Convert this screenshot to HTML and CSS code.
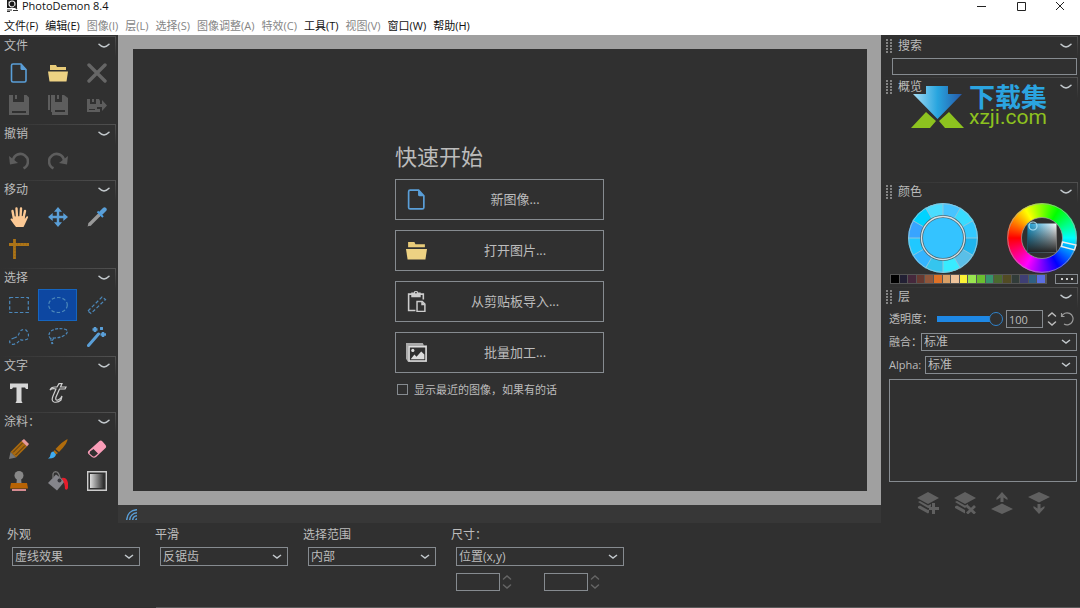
FILE: index.html
```html
<!DOCTYPE html>
<html lang="zh-CN">
<head>
<meta charset="utf-8">
<title>PhotoDemon 8.4</title>
<link rel="stylesheet" href="styles.css">
</head>
<body>
<svg class="defs" aria-hidden="true">
  <symbol id="chev" viewBox="0 0 12 6"><path d="M1 1.200Q3.500 3.800 6 3.900Q8.500 3.800 11 1.200" fill="none" stroke="#c3c9cd" stroke-width="1.500" stroke-linecap="round"/></symbol>
  <symbol id="grip" viewBox="0 0 6 14"><path d="M1 0V14M5 0V14" fill="none" stroke="#989898" stroke-width="1.600" stroke-dasharray="2 1"/></symbol>
  <symbol id="new" viewBox="0 0 20 20"><path d="M4 1H12L17 6.500V17.500Q17 19 15.500 19H4Q2.500 19 2.500 17.500V2.500Q2.500 1 4 1Z" fill="none" stroke="#5a9fd8" stroke-width="1.600"/><path d="M11.500 1L17.500 7H13Q11.500 7 11.500 5.500Z" fill="#5a9fd8"/></symbol>
  <symbol id="open" viewBox="0 0 20 20"><path d="M2 2H8L9 4H18V7H2Z" fill="#e8cb79"/><path d="M0 8.500H20L18.500 18.500H1.500Z" fill="#edd283"/></symbol>
  <symbol id="floppy" viewBox="0 0 20 20"><path d="M0 0H4V7H15V0H17.500L20 2.500V20H0ZM3 16V18H17V16Z" fill="#5d5d5d" fill-rule="evenodd"/><path d="M6 0H8V4H6Z" fill="#5d5d5d"/></symbol>
  <symbol id="spin" viewBox="0 0 10 16"><path d="M1.500 5L5 2L8.500 5M1.500 11L5 14L8.500 11" fill="none" stroke="currentColor" stroke-width="1.500" stroke-linecap="round"/></symbol>
  <symbol id="undo" viewBox="0 0 20 20"><path d="M4 9.500A7.500 7.500 0 1 1 14.500 17.300" fill="none" stroke="#5d5d5d" stroke-width="2.600"/><path d="M0 5L1 13.500L9 12Z" fill="#5d5d5d"/></symbol>
</svg>

<header class="titlebar">
  <svg class="app-icon" viewBox="0 0 13 12"><path d="M1 0H11V8H1Z" fill="#171717"/><circle cx="6" cy="4" r="3" fill="none" stroke="#eee" stroke-width="1.200"/><path d="M8 6L11 9M1 10H6M1 11.500H4M7 10.500H12" stroke="#333" stroke-width="1.200"/><circle cx="3" cy="2" r=".6" fill="#fff"/></svg>
  <h1 class="app-title">PhotoDemon 8.4</h1>
  <div class="window-buttons">
    <button class="win-btn" aria-label="最小化"><svg viewBox="0 0 10 10"><path d="M0 5.500H9" stroke="#222"/></svg></button>
    <button class="win-btn" aria-label="最大化"><svg viewBox="0 0 10 10"><path d="M1.500 1.500H9.500V9.500H1.500Z" fill="none" stroke="#222"/></svg></button>
    <button class="win-btn" aria-label="关闭"><svg viewBox="0 0 10 10"><path d="M1 1L9 9M9 1L1 9" stroke="#222"/></svg></button>
  </div>
</header>
<nav class="menubar">
  <button class="menu">文件(F)</button>
  <button class="menu">编辑(E)</button>
  <button class="menu" disabled>图像(I)</button>
  <button class="menu" disabled>层(L)</button>
  <button class="menu" disabled>选择(S)</button>
  <button class="menu" disabled>图像调整(A)</button>
  <button class="menu" disabled>特效(C)</button>
  <button class="menu">工具(T)</button>
  <button class="menu" disabled>视图(V)</button>
  <button class="menu">窗口(W)</button>
  <button class="menu">帮助(H)</button>
</nav>

<div class="workspace">
  <aside class="toolbox">
    <section class="tool-group">
      <button class="section-head"><span>文件</span><svg class="chev"><use href="#chev"/></svg></button>
      <div class="tools">
        <button class="tool" aria-label="新建"><svg><use href="#new"/></svg></button>
        <button class="tool" aria-label="打开"><svg><use href="#open"/></svg></button>
        <button class="tool" aria-label="关闭图像"><svg viewBox="0 0 20 20"><path d="M2 2L18 18M18 2L2 18" stroke="#666" stroke-width="3.400" stroke-linecap="round"/></svg></button>
        <button class="tool" aria-label="保存"><svg><use href="#floppy"/></svg></button>
        <button class="tool" aria-label="保存副本"><svg viewBox="0 0 20 20"><path d="M0 0H2V15H0ZM3 0H7V7H14V0H16L20 3V20H4V17H3ZM7 15V17H17V15Z" fill="#5d5d5d" fill-rule="evenodd"/><path d="M9 0H11V4H9Z" fill="#5d5d5d"/></svg></button>
        <button class="tool" aria-label="另存为"><svg viewBox="0 0 20 20"><path d="M0 4H3V9H9V4H12L13 6V9H15V5L20 10.500L15 16V12H10V14H13V17H0ZM2 14V15H8V14Z" fill="#5d5d5d" fill-rule="evenodd"/><path d="M5 4H7V7H5Z" fill="#5d5d5d"/></svg></button>
      </div>
    </section>
    <section class="tool-group">
      <button class="section-head"><span>撤销</span><svg class="chev"><use href="#chev"/></svg></button>
      <div class="tools">
        <button class="tool" aria-label="撤销"><svg><use href="#undo"/></svg></button>
        <button class="tool" aria-label="重做"><svg viewBox="0 0 20 20"><path d="M16 9.500A7.500 7.500 0 1 0 5.500 17.300" fill="none" stroke="#5d5d5d" stroke-width="2.600"/><path d="M20 5L19 13.500L11 12Z" fill="#5d5d5d"/></svg></button>
      </div>
    </section>
    <section class="tool-group">
      <button class="section-head"><span>移动</span><svg class="chev"><use href="#chev"/></svg></button>
      <div class="tools">
        <button class="tool" aria-label="手形"><svg viewBox="0 0 20 20"><path d="M5 12L3.500 4M8 10L7.500 1.500M11.500 10L12 1.500M14.500 11L16 4" stroke="#fbc894" stroke-width="2.400" stroke-linecap="round"/><path d="M4 9.500L15.500 9L15.800 12L17.500 9.500Q19.500 8.500 19 10.500L16 17L14.500 20H7L5 17.500L1.500 12.500Q1.500 11 3 11.500L5 13Z" fill="#fbc894"/></svg></button>
        <button class="tool" aria-label="移动"><svg viewBox="0 0 20 20"><path d="M10 2V18M2 10H18" stroke="#5a9fd8" stroke-width="2.400"/><path d="M10 0L14 4.700H6ZM10 20L14 15.300H6ZM0 10L4.700 6V14ZM20 10L15.300 6V14Z" fill="#5a9fd8"/></svg></button>
        <button class="tool" aria-label="吸管"><svg viewBox="0 0 20 20"><path d="M3 17L12 8" stroke="#999" stroke-width="3.400" stroke-linecap="round"/><path d="M.5 19.500L2 15.500L4.500 18Z" fill="#999"/><path d="M14 6L17.500 2.500" stroke="#5a9fd8" stroke-width="4.400" stroke-linecap="round"/><path d="M10.500 4.500L16 10" stroke="#4f9fe0" stroke-width="2"/></svg></button>
        <button class="tool" aria-label="测量"><svg viewBox="0 0 20 20"><path d="M5.500 0V20M0 5.500H20" stroke="#ac7417" stroke-width="2.800"/><path d="M8 5H19M6 8V19" stroke="#8f6116" stroke-dasharray="1 2"/></svg></button>
      </div>
    </section>
    <section class="tool-group">
      <button class="section-head"><span>选择</span><svg class="chev"><use href="#chev"/></svg></button>
      <div class="tools select-tools">
        <button class="tool" aria-label="矩形选区"><svg viewBox="0 0 20 20"><path d="M.7 2.500H19.300V17.500H.7Z" stroke-dasharray="3.500 2"/></svg></button>
        <button class="tool selected" aria-label="椭圆选区" aria-pressed="true"><svg viewBox="0 0 20 20"><ellipse cx="10" cy="10" rx="9.300" ry="7.500" stroke-dasharray="3.500 2"/></svg></button>
        <button class="tool" aria-label="线形选区"><svg viewBox="0 0 20 20"><path d="M1 16L15 2L18.500 4.500L4 18.500Z" stroke-dasharray="3.500 2"/></svg></button>
        <button class="tool" aria-label="多边形选区"><svg viewBox="0 0 20 20"><path d="M5 11Q9.500 10 10.500 5Q13 1.500 17 3Q21 7 18.500 12Q15 14 11 12.500Q9 16.500 4 17.500Q-1 16 1.500 12.500Z" stroke-dasharray="3 2"/></svg></button>
        <button class="tool" aria-label="套索"><svg viewBox="0 0 20 20"><path d="M3 12Q-1 8 3 4Q9 0 18 2.500Q21 5 17 8Q12 11 6 11Q2 10 3 13L4 17M6 11Q3 14 5 17" stroke-dasharray="3 1.500"/></svg></button>
        <button class="tool wand" aria-label="魔棒"><svg viewBox="0 0 20 20"><path d="M1.500 18.500L11.500 7" stroke-width="3" stroke-linecap="round"/><path d="M8 0V5M5.500 2.500H10.500M14.500 0V3M13 1.500H16M16 5V10M13.500 7.500H19" stroke-width="2.500"/></svg></button>
      </div>
    </section>
    <section class="tool-group">
      <button class="section-head"><span>文字</span><svg class="chev"><use href="#chev"/></svg></button>
      <div class="tools">
        <button class="tool" aria-label="文字"><svg viewBox="0 0 20 20"><path d="M1 .5H19V6H17L16 4.500H12.500V18L13.500 20H6.500L7.500 18V4.500H4L3 6H1Z" fill="#d6d6d6"/></svg></button>
        <button class="tool" aria-label="艺术文字"><svg viewBox="0 0 20 20"><path d="M2 7Q3 4 7 4H9L11 .7H14L12.500 4H18L17 6H11.500L8 14Q7 18 10 17Q13 16 14 13L13 17Q10 20 6 19Q3 18 5 13L8 6Q4 5 2 7Z" fill="none" stroke="#d0d0d0" stroke-width="1.200"/></svg></button>
      </div>
    </section>
    <section class="tool-group">
      <button class="section-head"><span>涂料：</span><svg class="chev"><use href="#chev"/></svg></button>
      <div class="tools">
        <button class="tool" aria-label="铅笔"><svg viewBox="0 0 20 20"><path d="M1.500 13L12.500 2L18 7.500L7 18.500Z" fill="#a9690e"/><path d="M4 13.500L13.500 4M6.500 16L16 6.500" stroke="#4e3617" stroke-width="1"/><path d="M12.500 2L15 0L20 5L18 7.500Z" fill="#e89a9a"/><path d="M0 20L1.500 13L7 18.500Z" fill="#777"/></svg></button>
        <button class="tool" aria-label="画笔"><svg viewBox="0 0 20 20"><path d="M19.500 0Q20 4 11 13L7.500 10Q15 2 19.500 0Z" fill="#b06c0c"/><path d="M6.500 11L10 14L8 15.500L5.500 13Z" fill="#b06c0c"/><path d="M5.500 12.500L8 15.500Q7 20 0 19.500Q2.500 18 2.500 15.500Q3 12.500 5.500 12.500Z" fill="#3fabef"/></svg></button>
        <button class="tool" aria-label="橡皮"><svg viewBox="0 0 20 20"><path d="M2 11.500L12.500 2Q14 1 15.500 2.500L18.500 6Q20 8 18 9.500L9 18Q7 19.500 5 18L1.500 15Q0 13 2 11.500Z" fill="#fa9db8"/><path d="M3 12.500L6.500 10L11 14.500L8 17Q6.500 18 5.500 17L2.500 14.500Z" fill="#303030"/></svg></button>
        <button class="tool" aria-label="图章"><svg viewBox="0 0 20 20"><circle cx="10" cy="4.500" r="4.500" fill="#888"/><path d="M8 7H12L12.500 12H7.500Z" fill="#888"/><path d="M2 12H18L19 17.500H1Z" fill="#b76304"/><path d="M3 19H17" stroke="#d58b91" stroke-width="2"/></svg></button>
        <button class="tool" aria-label="填充"><svg viewBox="0 0 20 20"><path d="M0 12L8 3.500L17 10L9 19.500Z" fill="#85858b"/><path d="M5 7V3Q6 0 9 1Q12 3 12 9" fill="none" stroke="#777" stroke-width="1.300"/><circle cx="11.500" cy="9.500" r="2" fill="#35353b"/><path d="M13.500 7Q19 6 20 12V17Q19 20 17 18Q17 12 13.500 7Z" fill="#e71d2b"/></svg></button>
        <button class="tool" aria-label="渐变"><svg viewBox="0 0 20 20"><linearGradient id="gr"><stop stop-color="#ddd"/><stop offset="1" stop-color="#2b2b2b"/></linearGradient><path d="M.7.7H19.300V19.300H.7Z" fill="#303030" stroke="#ccc" stroke-width="1.400"/><path d="M3 3H17V17H3Z" fill="url(#gr)"/></svg></button>
      </div>
    </section>
  </aside>

  <main class="canvas">
    <div class="quick-start">
      <h2 class="quick-title">快速开始</h2>
      <div class="quick-list">
        <button class="quick"><svg><use href="#new"/></svg><span>新图像...</span></button>
        <button class="quick"><svg><use href="#open"/></svg><span>打开图片...</span></button>
        <button class="quick"><svg viewBox="0 0 20 20"><path d="M9 18.500H2.500V3H16.500V8" fill="none" stroke="#ccc" stroke-width="1.500"/><path d="M5 1.500H7.500Q8 -.5 9.500 -.5Q11 -.5 11.500 1.500H14V6H5Z" fill="#ccc"/><circle cx="9.500" cy="1.500" r=".8" fill="#303030"/><path d="M10.500 10H15.500L18 12.500V19.500H10.500Z" fill="none" stroke="#ccc" stroke-width="1.400"/><path d="M14.500 9.500L18.500 13.500H14.500Z" fill="#ccc"/></svg><span>从剪贴板导入...</span></button>
        <button class="quick"><svg viewBox="0 0 20 20"><path d="M0 1H16L17 3H20V19H2L0 16Z" fill="#aaa"/><path d="M3 4.500H19V18H3Z" fill="#303030" stroke="#ddd" stroke-width="1.300"/><circle cx="6.500" cy="8" r="1.500" fill="#ddd"/><path d="M4.500 16.500L8 12L10 14L14.500 9L17.500 12V16.500Z" fill="#ddd"/></svg><span>批量加工...</span></button>
      </div>
      <label class="recent"><input type="checkbox">显示最近的图像，如果有的话</label>
    </div>
  </main>

  <div class="statusbar"><svg class="status-icon" viewBox="0 0 11 11"><path d="M.7 11C1 5 5 1 11 .7M3.700 11C4 7 7 4 11 3.700M6.700 11Q7 7 11 6.700M9.500 11L11 9.500" fill="none" stroke="#5a9fd8" stroke-width="1.500"/></svg></div>

  <aside class="panels">
    <section class="panel">
      <button class="section-head"><svg class="grip"><use href="#grip"/></svg><span>搜索</span><svg class="chev"><use href="#chev"/></svg></button>
      <input class="search" type="search" aria-label="搜索">
    </section>
    <section class="panel overview">
      <button class="section-head"><svg class="grip"><use href="#grip"/></svg><span>概览</span><svg class="chev"><use href="#chev"/></svg></button>
      <div class="watermark">
        <svg class="wm-logo" viewBox="0 0 53 42"><linearGradient id="wm"><stop stop-color="#a8def5"/><stop offset=".5" stop-color="#28a5df"/><stop offset="1" stop-color="#2658a8"/></linearGradient><path d="M15 0H37V8H51L26.500 33L2 8H15Z" fill="url(#wm)"/><path d="M15 26L25 35L19 42H0ZM38 26L53 42H34L28 35Z" fill="#8dc21f"/></svg>
        <div class="wm-text"><span class="wm-cn">下载集</span><span class="wm-url">xzji.com</span></div>
      </div>
    </section>
    <section class="panel">
      <button class="section-head"><svg class="grip"><use href="#grip"/></svg><span>颜色</span><svg class="chev"><use href="#chev"/></svg></button>
      <div class="wheels">
        <div class="wheel variants"><svg viewBox="0 0 70 70"><g stroke="#8bc5dc" stroke-width="1"><path d="M35 0V70M0 35H70M17.500 4.700L52.500 65.300M52.500 4.700L17.500 65.300M4.700 17.500L65.300 52.500M65.300 17.500L4.700 52.500"/></g><circle cx="35" cy="35" r="34.300" fill="none" stroke="#8bc5dc"/><circle cx="35" cy="35" r="21.500" fill="#34c3ff" stroke="#4b6b78" stroke-width="3"/><circle cx="35" cy="35" r="21.500" fill="none" stroke="#d5e1e5" stroke-width="1.300"/></svg></div>
        <div class="wheel hue"><svg viewBox="0 0 70 70"><defs><linearGradient id="sv"><stop stop-color="#129bd3"/><stop offset="1" stop-color="#fff"/></linearGradient><linearGradient id="bk" x2="0" y2="1"><stop stop-color="#222" stop-opacity="0"/><stop offset="1" stop-color="#222"/></linearGradient></defs><circle cx="35" cy="35" r="34.300" fill="none" stroke="#a7a7a7" stroke-width=".7"/><circle cx="35" cy="35" r="20.500" fill="#303030" stroke="#a7a7a7" stroke-width=".7"/><path d="M20.500 20.500H49.500V49.500H20.500Z" fill="url(#sv)"/><path d="M20.500 20.500H49.500V49.500H20.500Z" fill="url(#bk)"/><circle cx="26" cy="23" r="4" fill="none" stroke="#a6dff5" stroke-width="1.200"/><path d="M55.500 39L69 42L67.500 47L54.500 43.500Z" fill="none" stroke="#eee" stroke-width="1.400"/></svg></div>
      </div>
      <div class="palette-row">
        <div class="palette"><i class="c1"></i><i class="c2"></i><i class="c3"></i><i class="c4"></i><i class="c5"></i><i class="c6"></i><i class="c7"></i><i class="c8"></i><i class="c9"></i><i class="c10"></i><i class="c11"></i><i class="c12"></i><i class="c13"></i><i class="c14"></i><i class="c15"></i><i class="c16"></i><i class="c17"></i><i class="c18"></i></div>
        <button class="more" aria-label="更多颜色"><svg viewBox="0 0 12 4"><path d="M0 1H2V3H0ZM5 1H7V3H5ZM10 1H12V3H10Z" fill="#ccc"/></svg></button>
      </div>
    </section>
    <section class="panel layers">
      <button class="section-head"><svg class="grip"><use href="#grip"/></svg><span>层</span><svg class="chev"><use href="#chev"/></svg></button>
      <div class="layer-body">
        <div class="row opacity-row"><label for="op">透明度：</label><input id="op" class="slider" type="range" value="100"><input class="number opacity" aria-label="透明度数值" value="100"><svg class="spin"><use href="#spin"/></svg><button class="reset" aria-label="重置"><svg viewBox="0 0 14 14"><path d="M1.500 4.500A6 6 0 1 1 4 12M1.500 1V4.500H4.500" fill="none" stroke="#9a9a9a" stroke-width="1.200"/></svg></button></div>
        <div class="row"><label for="blend">融合：</label><select id="blend" class="combo"><option>标准</option></select></div>
        <div class="row"><label for="alpha">Alpha:</label><select id="alpha" class="combo"><option>标准</option></select></div>
        <div class="layer-list"></div>
        <div class="layer-buttons">
          <button aria-label="添加图层"><svg viewBox="0 0 22 22"><path d="M0 6L11 0L22 6L11 12Z"/><path d="M1 10L3 9L11 13.500L14 12V14.500L11 16ZM1 14.500L3 13.500L11 18L12 17.500V20.500L11 21.500L1 16ZM15 11H18V15H22V18H18V22H15V18H12V15H15Z"/></svg></button>
          <button aria-label="删除图层"><svg viewBox="0 0 22 22"><path d="M0 6L11 0L22 6L11 12Z"/><path d="M1 10L3 9L11 13.500L14 12V14L11 16ZM1 14.500L3 13.500L11 18V21.500L1 16Z"/><path d="M13 14L21 21.500M21 14L13 21.500" stroke="#606060" stroke-width="2.800"/></svg></button>
          <button aria-label="上移图层"><svg viewBox="0 0 22 22"><path d="M0 17L11 11.500L22 17L11 22Z"/><path d="M11 0L16.500 6V8L12.500 5.500V10H9.500V5.500L5.500 8V6Z"/></svg></button>
          <button aria-label="下移图层"><svg viewBox="0 0 22 22"><path d="M0 5L11 0L22 5L11 10.500Z"/><path d="M11 22L16.500 16V14L12.500 16.500V12H9.500V16.500L5.500 14V16Z"/></svg></button>
        </div>
      </div>
    </section>
  </aside>
</div>

<footer class="options">
  <div class="option"><label for="look">外观</label><select id="look" class="combo"><option>虚线效果</option></select></div>
  <div class="option"><label for="smooth">平滑</label><select id="smooth" class="combo"><option>反锯齿</option></select></div>
  <div class="option"><label for="area">选择范围</label><select id="area" class="combo"><option>内部</option></select></div>
  <div class="option wide"><label for="size">尺寸：</label><select id="size" class="combo"><option>位置(x,y)</option></select>
    <div class="coords"><div class="coord"><input class="number" aria-label="x"><svg class="spin dim"><use href="#spin"/></svg></div><div class="coord"><input class="number" aria-label="y"><svg class="spin dim"><use href="#spin"/></svg></div></div>
  </div>
</footer>
<div class="window-edge"></div>
</body>
</html>
```
FILE: styles.css
```css
* { box-sizing: border-box; }
body {
  margin: 0;
  min-height: 100vh;
  display: flex;
  flex-direction: column;
  background: #303030;
  color: #bcbcbc;
  font: 12px/16px "Open Sans", "Noto Sans CJK SC", sans-serif;
}
button, input, select { font: inherit; color: inherit; margin: 0; padding: 0; border: 0; border-radius: 0; background: none; }
svg { display: block; }
.defs { position: absolute; width: 0; height: 0; }

.titlebar { display: flex; align-items: center; height: 16px; padding: 0 10px 4px 6px; background: #fff; color: #111; }
.app-icon { width: 13px; height: 12px; margin-right: 3px; }
.app-title { margin: 0; font-size: 11px; line-height: 12px; font-weight: 400; }
.window-buttons { display: flex; gap: 19px; margin-left: auto; }
.win-btn { width: 20px; display: flex; justify-content: center; }
.win-btn svg { width: 10px; height: 10px; }

.menubar { display: flex; gap: 7px; height: 19px; padding-left: 4px; background: #fff; }
.menu { color: #111; font-size: 11px; line-height: 18px; white-space: nowrap; }
.menu:disabled { color: #858585; }

.workspace { flex: 1; display: grid; grid-template-columns: 118px 1fr 199px; grid-template-rows: 1fr 18px; }
.toolbox { grid-row: 1 / 3; padding: 1px 2px 0 0; }
.tool-group { padding-bottom: 3px; }
.section-head {
  display: flex;
  align-items: center;
  width: 100%;
  height: 21px;
  padding: 0 6px 1px 4px;
  background: linear-gradient(to right, #303030, #505050) top / 100% 1px no-repeat, linear-gradient(#505050, #303030) right / 1px 100% no-repeat;
}
.chev { width: 12px; height: 6px; margin-left: auto; }
.tools { display: grid; grid-template-columns: 38px 39px 39px; grid-auto-rows: 32px; }
.tool { display: flex; align-items: center; justify-content: center; }
.tool svg { width: 20px; height: 20px; }
.select-tools svg { fill: none; stroke: #4c88ba; stroke-width: 1.2; }
.select-tools .wand svg { stroke: #5a9fd8; }
.selected { background: #0d47a1; border: 1px solid #1565c0; }

.canvas { display: flex; align-items: center; justify-content: center; border: 14px solid #a0a0a0; border-left-width: 15px; }
.quick-start { width: 210px; padding: 0 1px 3px 0; }
.quick-title { margin: 0 0 7px; font-size: 22px; line-height: 32px; font-weight: 400; }
.quick-list { display: grid; gap: 10px; }
.quick { display: flex; align-items: center; height: 41px; padding-left: 10px; border: 1px solid #868b90; font-size: 13px; }
.quick svg { width: 21px; height: 21px; }
.quick span { flex: 1; text-align: center; }
.recent { display: flex; align-items: center; gap: 6px; margin: 9px 0 0 2px; font-size: 11px; white-space: nowrap; }
.recent input { appearance: none; width: 11px; height: 11px; border: 1px solid #868b90; }

.statusbar { grid-column: 2; grid-row: 2; display: flex; align-items: center; padding-left: 8px; background: #373737; }
.status-icon { width: 11px; height: 11px; }

.panels { grid-column: 3; grid-row: 1 / 3; display: flex; flex-direction: column; padding: 1px 2px 0 0; }
.panels .section-head { padding-left: 5px; }
.grip { width: 6px; height: 14px; margin-right: 6px; }
.search, .number { border: 1px solid #868b90; }
.search { appearance: none; display: block; width: calc(100% - 12px); height: 17px; margin: 1px 0 2px 11px; }
.overview { height: 105px; }
.watermark { position: absolute; top: 84px; right: 33px; display: flex; gap: 5px; }
.wm-logo { width: 53px; height: 42px; margin-top: 2px; }
.wm-text { display: flex; flex-direction: column; }
.wm-cn { color: #2ba4e0; font: 700 26px/24px "Noto Sans CJK SC", sans-serif; }
.wm-url { color: #8dc21f; font: 21px/18px Roboto, sans-serif; }

.wheels { display: flex; justify-content: space-between; padding: 0 1px 0 27px; }
.wheel { width: 70px; height: 70px; border-radius: 50%; }
.variants { background: conic-gradient(#47c4ff 0 30deg, #38dcff 0 60deg, #33c9ff 0 90deg, #1fb4ee 0 120deg, #5abfe8 0 150deg, #38ecff 0 180deg, #35c5ee 0 210deg, #34b4ff 0 240deg, #20c8ff 0 270deg, #38a4ff 0 300deg, #00d3ff 0 330deg, #4addff 0); }
.hue { background: conic-gradient(from 270deg, red, yellow, lime, cyan, blue, magenta, red); }
.palette-row { display: flex; gap: 8px; padding: 1px 0 3px 9px; }
.palette { flex: 1; display: flex; border: 1px solid #555; background: #555; }
.palette i { flex: 1; border-right: 1px solid #555; }
.c1 { background: #000; } .c2 { background: #222034; } .c3 { background: #45283c; }
.c4 { background: #663931; } .c5 { background: #8f563b; } .c6 { background: #df7126; }
.c7 { background: #d9a066; } .c8 { background: #eec39a; } .c9 { background: #fbf236; }
.c10 { background: #99e550; } .c11 { background: #6abe30; } .c12 { background: #37946e; }
.c13 { background: #4b692f; } .c14 { background: #524b24; } .c15 { background: #323c39; }
.c16 { background: #3f3f74; } .c17 { background: #306082; } .c18 { background: #5b6ee1; }
.more { width: 23px; height: 10px; display: flex; align-items: center; justify-content: center; border: 1px solid #868b90; }
.more svg { width: 12px; height: 4px; }

.layers { flex: 1; display: flex; flex-direction: column; }
.layer-body { flex: 1; display: flex; flex-direction: column; gap: 5px; padding: 2px 1px 5px 8px; }
.row { display: flex; align-items: center; height: 18px; white-space: nowrap; }
.row .combo { flex: 1; }
.opacity-row { justify-content: space-between; padding-right: 3px; }
.row label { width: 32px; font-size: 11px; }
.row label[for="alpha"] { width: 36px; }
.row label[for="op"] { width: 44px; }
.slider { appearance: none; width: 66px; height: 18px; background: linear-gradient(#1e88e5, #1e88e5) left / 54px 6px no-repeat; }
.slider::-webkit-slider-thumb { appearance: none; width: 14px; height: 14px; border: 1px solid #2f83cc; border-radius: 50%; background: #303030; }
.number { width: 44px; height: 18px; padding-left: 2px; }
.number.opacity { width: 37px; font-size: 11px; }
.spin { width: 10px; height: 16px; color: #bbb; }
.spin.dim { color: #656565; }
.reset svg { width: 14px; height: 14px; }
.combo {
  appearance: none;
  min-width: 0;
  height: 18px;
  padding: 0 18px 0 2px;
  border: 1px solid #868b90;
  font-size: 12px;
  line-height: 16px;
  background: url("data:image/svg+xml,%3Csvg xmlns='http://www.w3.org/2000/svg' width='10' height='6'%3E%3Cpath d='M1 1L5 4L9 1' fill='none' stroke='%23c3c9cd' stroke-width='1.500'/%3E%3C/svg%3E") right 5px center no-repeat;
}
.layer-list { flex: 1; min-height: 60px; border: 1px solid #868b90; }
.layer-buttons { display: flex; justify-content: center; gap: 15px; padding: 5px 0 4px; }
.layer-buttons svg { width: 22px; height: 22px; fill: #606060; }

.options { display: flex; gap: 15px; min-height: 84px; padding: 4px 7px; }
.option { display: flex; flex-direction: column; width: 133px; }
.option.wide { width: 173px; }
.option .combo { margin: 4px 0 0 5px; height: 19px; }
.coords { display: flex; gap: 32px; margin: 7px 0 0 5px; }
.coord { display: flex; align-items: center; gap: 2px; }
.window-edge { height: 1px; margin-left: 156px; background: #5a5a5a; }
```
